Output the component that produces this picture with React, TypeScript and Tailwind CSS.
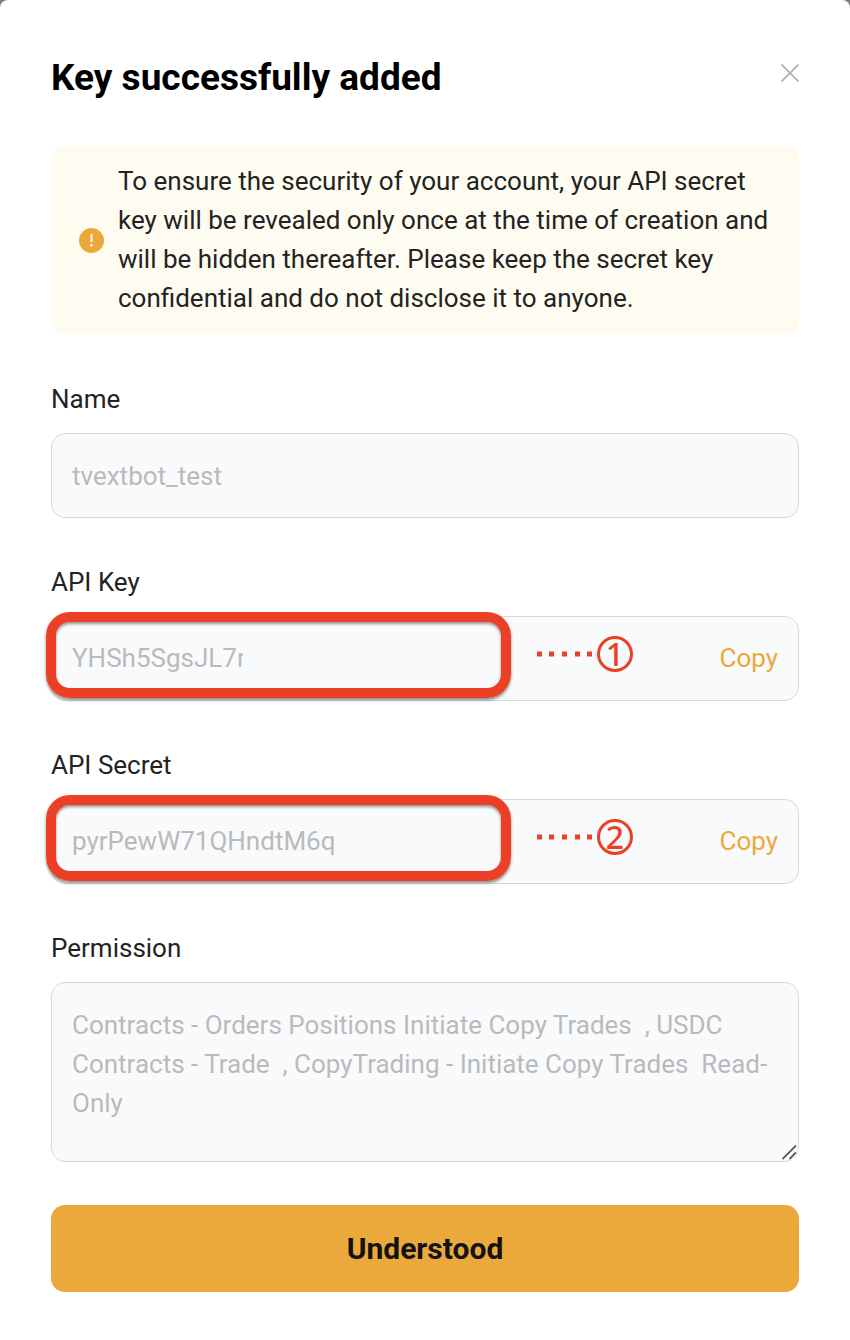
import { useId } from "react";
import type { ReactNode } from "react";

const boxClass = "rounded-[14px] border border-[#d5d9de] bg-[#f9fafc]";

function Field({ label, children }: { label: string; children: (id: string) => ReactNode }) {
  const id = useId();
  return (
    <div className="flex flex-col gap-[14px]">
      <label htmlFor={id} className="text-[26px] leading-[39px] text-[#232323]">
        {label}
      </label>
      {children(id)}
    </div>
  );
}

function Callout({ mark }: { mark: string }) {
  return (
    <>
      <div className="pointer-events-none absolute -left-[5px] -top-1 h-[86px] w-[465px] rounded-[24px] border-10 border-[#eb4026] shadow-[0_2px_3px_rgba(0,0,0,0.45),inset_0_2px_3px_rgba(0,0,0,0.4)]" />
      <div className="pointer-events-none absolute left-[485px] top-[18px] flex h-10 items-center gap-[3px] text-[#eb4026]">
        <svg width="58" height="6" viewBox="0 0 58 6" fill="currentColor" aria-hidden="true">
          <rect x="1" y="0.5" width="5" height="5" />
          <rect x="13" y="0.5" width="5" height="5" />
          <rect x="26" y="0.5" width="5" height="5" />
          <rect x="39" y="0.5" width="5" height="5" />
          <rect x="51" y="0.5" width="5" height="5" />
        </svg>
        <span className="flex size-9 items-center justify-center rounded-full border-[3px] border-[#eb4026] font-['Noto_Sans',sans-serif] text-[32px] leading-[30px] font-medium">
          {mark}
        </span>
      </div>
    </>
  );
}

function SecretField({ label, value, mark, inputClass }: { label: string; value: string; mark: string; inputClass: string }) {
  return (
    <Field label={label}>
      {(id) => (
        <div className="relative">
          <div className={`${boxClass} flex h-[85px] items-center justify-between px-5`}>
            <input
              id={id}
              readOnly
              defaultValue={value}
              className={`${inputClass} bg-transparent text-[26px] leading-[39px] text-[#b9babc] outline-none`}
            />
            <button type="button" className="text-[26px] leading-[39px] text-[#eca93b]">
              Copy
            </button>
          </div>
          <Callout mark={mark} />
        </div>
      )}
    </Field>
  );
}

export default function App() {
  return (
    <div className="min-h-screen bg-[#808080] font-[Roboto,sans-serif]">
      <main className="min-h-screen rounded-t-lg bg-white px-[51px] pt-[51px] pb-12">
        <header className="flex items-start justify-between">
          <h1 className="text-[37px] leading-[54px] font-bold text-black">Key successfully added</h1>
          <button type="button" aria-label="Close" className="mt-[13px] text-[#b0b0b8]">
            <svg width="18" height="18" viewBox="0 0 18 18" fill="none" stroke="currentColor" strokeWidth="1.8">
              <path d="M0.5 0.5L17.5 17.5M17.5 0.5L0.5 17.5" />
            </svg>
          </button>
        </header>

        <div role="alert" className="mt-[41px] flex items-center gap-[14px] rounded-[12px] bg-[#fefcf0] py-4 pr-7 pl-7">
          <svg width="25" height="25" viewBox="0 0 25 25" className="shrink-0" aria-hidden="true">
            <circle cx="12.5" cy="12.5" r="12.5" fill="#eca93b" />
            <path d="M11.3 6.3h2.4l-.3 8h-1.8z" fill="#fefcf0" />
            <circle cx="12.5" cy="17.3" r="1.3" fill="#fefcf0" />
          </svg>
          <p className="text-[26px] leading-[39px] text-[#232323]">
            To ensure the security of your account, your API secret key will be revealed only once at the time of
            creation and will be hidden thereafter. Please keep the secret key confidential and do not disclose it to
            anyone.
          </p>
        </div>

        <form className="mt-[46px]" onSubmit={(e) => e.preventDefault()}>
          <div className="flex flex-col gap-[45px]">
            <Field label="Name">
              {(id) => (
                <input
                  id={id}
                  readOnly
                  defaultValue="tvextbot_test"
                  className={`${boxClass} h-[85px] w-full px-5 text-[26px] leading-[39px] text-[#b9babc] outline-none`}
                />
              )}
            </Field>
            <SecretField label="API Key" value="YHSh5SgsJL7r" mark="1" inputClass="w-[171px]" />
            <SecretField label="API Secret" value="pyrPewW71QHndtM6q" mark="2" inputClass="w-[264px]" />
            <Field label="Permission">
              {(id) => (
                <div className="relative flex">
                  <textarea
                    id={id}
                    readOnly
                    defaultValue="Contracts - Orders Positions Initiate Copy Trades  , USDC Contracts - Trade  , CopyTrading - Initiate Copy Trades  Read-Only"
                    className={`${boxClass} h-[180px] w-full resize-none overflow-hidden px-5 py-[23px] text-[26px] leading-[39px] text-[#b9babc] outline-none`}
                  />
                  <svg
                    width="15"
                    height="15"
                    viewBox="0 0 15 15"
                    className="pointer-events-none absolute right-[2px] bottom-[2px]"
                    fill="none"
                    aria-hidden="true"
                  >
                    <path d="M2 14.5L15 1.5M9 14.5L15 8.5" stroke="#fff" strokeWidth="2" />
                    <path d="M0.5 14L14 0.5M7.5 14L14 7.5" stroke="#58595b" strokeWidth="1.8" />
                  </svg>
                </div>
              )}
            </Field>
          </div>
          <button
            type="submit"
            className="mt-[43px] h-[87px] w-full rounded-[14px] bg-[#eca93b] text-[30px] leading-10 font-bold text-[#121214]"
          >
            Understood
          </button>
        </form>
      </main>
    </div>
  );
}
